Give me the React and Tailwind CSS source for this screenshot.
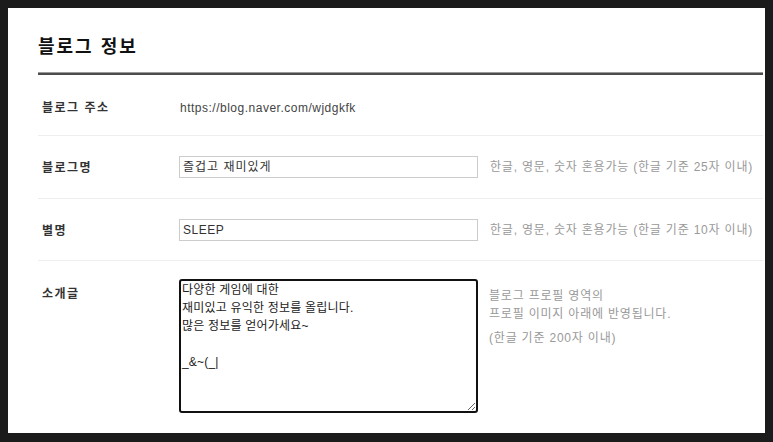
import React from "react";

const font = { fontFamily: '"Liberation Sans", "Noto Sans CJK KR", sans-serif' };

function Row({ label, children, className = "", labelPad = "pt-[2px]" }) {
  return (
    <div className={`flex items-center border-b border-[#eeeeee] ${className}`}>
      <div className={`w-[141px] shrink-0 pl-[4px] ${labelPad} text-[12px] tracking-[1.5px] font-bold text-[#333]`}>{label}</div>
      {children}
    </div>
  );
}

export default function App() {
  return (
    <div className="w-[773px] h-[442px] bg-[#1b1b1b] pt-[8px] pl-[8px] pr-[8px] pb-[9px]" style={font}>
      <div className="h-full bg-white pl-[30px] pr-[2px]">
        <div className="h-[64px] pt-[26px]">
          <h1 className="text-[18px] leading-[26px] tracking-[2px] font-bold text-[#111]">블로그 정보</h1>
        </div>
        <div className="h-[3px] bg-[#4d4d4d] border-t border-[#999]"></div>
        <Row label="블로그 주소" className="h-[61px]" labelPad="pt-[6px]">
          <span className="pt-[5px] text-[12px] tracking-[0.5px] text-[#444] pl-[1px]">https://blog.naver.com/wjdgkfk</span>
        </Row>
        <Row label="블로그명" className="h-[63px]">
          <div className="w-[299px] h-[22px] border border-[#cccccc] px-[3px] flex items-center text-[12px] tracking-[1px] text-[#333]">즐겁고 재미있게</div>
          <span className="ml-[12px] text-[12px] tracking-[0.8px] text-[#999]">한글, 영문, 숫자 혼용가능 (한글 기준 25자 이내)</span>
        </Row>
        <Row label="별명" className="h-[62px]">
          <div className="w-[299px] h-[22px] border border-[#cccccc] px-[3px] flex items-center text-[12px] tracking-[0.5px] text-[#333]">SLEEP</div>
          <span className="ml-[12px] text-[12px] tracking-[0.8px] text-[#999]">한글, 영문, 숫자 혼용가능 (한글 기준 10자 이내)</span>
        </Row>
        <div className="flex items-start pt-[18px]">
          <div className="w-[141px] shrink-0 pl-[4px] pt-[6px] text-[12px] tracking-[1.5px] font-bold text-[#333]">소개글</div>
          <textarea
            className="w-[299px] h-[134px] border-2 border-[#111] rounded-[3px] px-[1px] py-0 text-[12px] leading-[18px] tracking-[0.2px] text-[#222] outline-none resize"
            style={{ ...font, marginTop: 0 }}
            defaultValue={"다양한 게임에 대한\n재미있고 유익한 정보를 올립니다.\n많은 정보를 얻어가세요~\n\n_&~(_|"}
          />
          <div className="ml-[11px] pt-[8px] text-[12px] leading-[18px] tracking-[0.8px] text-[#999]">
            <div>블로그 프로필 영역의</div>
            <div>프로필 이미지 아래에 반영됩니다.</div>
            <div className="mt-[6px]">(한글 기준 200자 이내)</div>
          </div>
        </div>
      </div>
    </div>
  );
}
